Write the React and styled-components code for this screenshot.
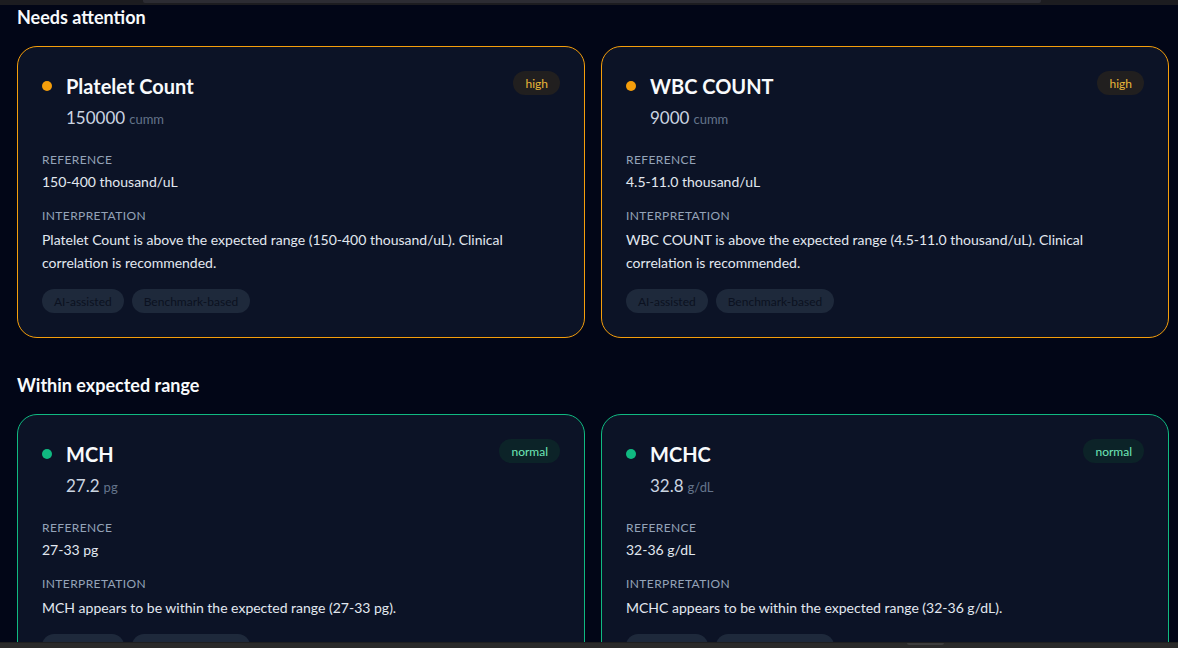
import React from "react";
import styled, { createGlobalStyle } from "styled-components";

const tones = {
  high: {
    border: "#f59e0b",
    dot: "#f59e0b",
    badgeBg: "#211f1f",
    badgeFg: "#eab73a",
  },
  normal: {
    border: "#10b981",
    dot: "#10b981",
    badgeBg: "#0c2328",
    badgeFg: "#6ee7b7",
  },
};

const GlobalStyle = createGlobalStyle`
  html, body { margin: 0; padding: 0; }
  body {
    background: #020617;
    font-family: Lato, "Noto Sans", "Liberation Sans", sans-serif;
    -webkit-font-smoothing: antialiased;
  }
  * { box-sizing: border-box; }
`;

const Page = styled.div`
  height: 100vh;
  display: flex;
  flex-direction: column;
  overflow: hidden;
  background: #020617;
`;

const TopStrip = styled.div`
  flex: 0 0 5px;
  background: #1c1c20;
  display: flex;
  padding-left: 143px;
`;

const TopThumb = styled.div`
  width: 898px;
  height: 3px;
  background: #2c2c33;
  border-radius: 0 0 2px 2px;
`;

const Scroller = styled.main`
  flex: 1;
  overflow: hidden;
  padding: 0 9px 0 17px;
`;

const BottomStrip = styled.div`
  flex: 0 0 6px;
  background: #2a2a2a;
  border-top: 1px solid #1f1f1f;
  display: flex;
  padding-left: 907px;
`;

const BottomKnob = styled.div`
  width: 37px;
  height: 2px;
  background: #3d3d3d;
  border-radius: 0 0 2px 2px;
`;

const Section = styled.section`
  width: 1152px;
  & + & {
    margin-top: 35px;
  }
`;

const SectionTitle = styled.h2`
  margin: 0 0 17px;
  font-size: 18px;
  line-height: 24px;
  font-weight: 700;
  color: #f8fafc;
`;

const Grid = styled.div`
  display: grid;
  grid-template-columns: 1fr 1fr;
  gap: 16px;
`;

const Card = styled.article`
  border-radius: 20px;
  border: 1px solid ${(p) => tones[p.$tone].border};
  background: #0c1326;
  padding: 24px;
  display: flex;
  flex-direction: column;
`;

const Header = styled.div`
  display: flex;
  justify-content: space-between;
  align-items: flex-start;
`;

const TitleRow = styled.div`
  display: flex;
  align-items: center;
  gap: 14px;
  height: 28px;
  margin-top: 1px;
`;

const Dot = styled.span`
  width: 10px;
  height: 10px;
  border-radius: 50%;
  background: ${(p) => tones[p.$tone].dot};
  flex: none;
`;

const Title = styled.h3`
  margin: 0;
  font-size: 20px;
  line-height: 28px;
  font-weight: 700;
  color: #f8fafc;
`;

const Badge = styled.span`
  height: 24px;
  padding: 0 12px;
  border-radius: 999px;
  display: inline-flex;
  align-items: center;
  font-size: 12px;
  background: ${(p) => tones[p.$tone].badgeBg};
  color: ${(p) => tones[p.$tone].badgeFg};
`;

const ValueRow = styled.div`
  margin: 4px 0 0 24px;
  display: flex;
  align-items: baseline;
  gap: 4px;
  line-height: 28px;
`;

const Value = styled.span`
  font-size: 17px;
  color: #cbd5e1;
`;

const Unit = styled.span`
  font-size: 13px;
  color: #64748b;
`;

const Label = styled.div`
  font-size: 12px;
  line-height: 16px;
  letter-spacing: 0.4px;
  text-transform: uppercase;
  color: #94a3b8;
  margin-top: ${(p) => p.$mt}px;
`;

const RefValue = styled.div`
  margin-top: 4px;
  font-size: 14px;
  line-height: 20px;
  color: #e2e8f0;
`;

const Interp = styled.p`
  margin: 4px 0 0;
  font-size: 14px;
  line-height: 23px;
  color: #e2e8f0;
`;

const Tags = styled.div`
  margin-top: 15px;
  display: flex;
  gap: 8px;
`;

const Tag = styled.span`
  height: 24px;
  padding: 0 12px;
  border-radius: 999px;
  display: inline-flex;
  align-items: center;
  font-size: 12px;
  background: #1e293b;
  color: #0b1120;
`;

const attention = [
  {
    name: "Platelet Count",
    value: "150000",
    unit: "cumm",
    ref: "150-400 thousand/uL",
    text: "Platelet Count is above the expected range (150-400 thousand/uL). Clinical correlation is recommended.",
  },
  {
    name: "WBC COUNT",
    value: "9000",
    unit: "cumm",
    ref: "4.5-11.0 thousand/uL",
    text: "WBC COUNT is above the expected range (4.5-11.0 thousand/uL). Clinical correlation is recommended.",
  },
];

const normal = [
  {
    name: "MCH",
    value: "27.2",
    unit: "pg",
    ref: "27-33 pg",
    text: "MCH appears to be within the expected range (27-33 pg).",
  },
  {
    name: "MCHC",
    value: "32.8",
    unit: "g/dL",
    ref: "32-36 g/dL",
    text: "MCHC appears to be within the expected range (32-36 g/dL).",
  },
];

function ResultCard({ item, tone }) {
  return (
    <Card $tone={tone}>
      <Header>
        <TitleRow>
          <Dot $tone={tone} />
          <Title>{item.name}</Title>
        </TitleRow>
        <Badge $tone={tone}>{tone}</Badge>
      </Header>
      <ValueRow>
        <Value>{item.value}</Value>
        <Unit>{item.unit}</Unit>
      </ValueRow>
      <Label $mt={19}>Reference</Label>
      <RefValue>{item.ref}</RefValue>
      <Label $mt={16}>Interpretation</Label>
      <Interp>{item.text}</Interp>
      <Tags>
        <Tag>AI-assisted</Tag>
        <Tag>Benchmark-based</Tag>
      </Tags>
    </Card>
  );
}

export default function App() {
  return (
    <>
      <GlobalStyle />
      <Page>
        <TopStrip>
          <TopThumb />
        </TopStrip>
        <Scroller>
          <Section>
            <SectionTitle>Needs attention</SectionTitle>
            <Grid>
              {attention.map((it) => (
                <ResultCard key={it.name} item={it} tone="high" />
              ))}
            </Grid>
          </Section>
          <Section>
            <SectionTitle>Within expected range</SectionTitle>
            <Grid>
              {normal.map((it) => (
                <ResultCard key={it.name} item={it} tone="normal" />
              ))}
            </Grid>
          </Section>
        </Scroller>
        <BottomStrip>
          <BottomKnob />
        </BottomStrip>
      </Page>
    </>
  );
}
